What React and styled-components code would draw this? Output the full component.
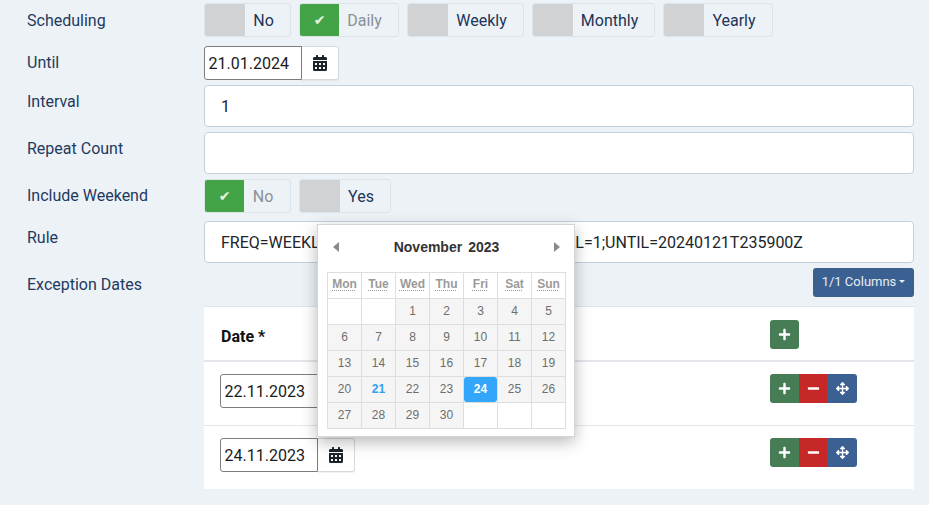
import React from 'react';
import styled, { createGlobalStyle } from 'styled-components';
import { FaArrowsAlt, FaCalendarAlt, FaMinus, FaPlus } from 'react-icons/fa';

const GlobalStyle = createGlobalStyle`
  html, body {
    margin: 0;
    padding: 0;
    background-color: #edf2f7;
    overflow: hidden;
  }
  body {
    font-family: Roboto, "Liberation Sans", sans-serif;
    font-size: 16px;
    line-height: 24px;
    color: #1c3558;
  }
`;

const Page = styled.div`
  position: relative;
  width: 929px;
  height: 505px;
  padding-top: 3px;
  box-sizing: border-box;
  overflow: hidden;
`;

const Row = styled.div`
  display: grid;
  grid-template-columns: 177px 710px;
  padding-left: 27px;
  margin-bottom: ${(p) => p.$after}px;
`;

const Label = styled.div`
  padding-top: ${(p) => p.$top}px;
  line-height: 24px;
  color: #1f3a5f;
`;

const ToggleGroup = styled.div`
  display: flex;
  gap: 8px;
`;

const Toggle = styled.div`
  display: flex;
  width: ${(p) => p.$width}px;
  height: 34px;
  box-sizing: border-box;
  border: 1px solid #dce3ea;
  border-radius: 3px;
  overflow: hidden;
`;

const ToggleHandle = styled.div`
  flex: 0 0 40px;
  margin: ${(p) => (p.$on ? '-1px 0 -1px -1px' : '0')};
  display: flex;
  align-items: center;
  justify-content: center;
  padding-left: ${(p) => (p.$on ? 1 : 0)}px;
  box-sizing: border-box;
  background-color: ${(p) => (p.$on ? '#43a447' : '#d0d2d4')};
  color: #e8f5e4;
  font: 14px "DejaVu Sans", sans-serif;
`;

const ToggleText = styled.div`
  flex: 1;
  padding-right: 8px;
  text-align: center;
  line-height: 33px;
  color: ${(p) => (p.$on ? '#8a9096' : '#1c3558')};
`;

const DateGroup = styled.div`
  display: flex;
  height: 34px;
`;

const DateInput = styled.input`
  width: 98px;
  height: 34px;
  box-sizing: border-box;
  padding: 0 0 0 3.5px;
  border: 1px solid #7d7d7d;
  border-radius: 3px 0 0 3px;
  background-color: #fff;
  font: 16px Roboto, sans-serif;
  color: #1a1a1a;
  outline: none;
`;

const DateButton = styled.button`
  width: 37px;
  height: 34px;
  padding: 0 0 1px;
  border: 1px solid #d6d9dc;
  border-left: none;
  border-radius: 0 3px 3px 0;
  background-color: #fff;
  box-shadow: 0 1px 1px rgba(0, 0, 0, 0.06);
  color: #1d2228;
  font-size: 16px;
  display: flex;
  align-items: center;
  justify-content: center;
`;

const TextInput = styled.input`
  width: 100%;
  height: 42px;
  box-sizing: border-box;
  padding: 0 16px;
  border: 1px solid #c5d0dd;
  border-radius: 4px;
  background-color: #fff;
  font: 16px Roboto, sans-serif;
  color: #212529;
  outline: none;
`;

const ColumnsBar = styled.div`
  display: flex;
  justify-content: flex-end;
  margin-bottom: 9px;
`;

const ColumnsButton = styled.button`
  width: 101px;
  height: 29px;
  padding: 0 0 2px;
  border: none;
  border-radius: 3px;
  background-color: #3b6192;
  color: #e6edf5;
  font: 13px Roboto, sans-serif;
  display: flex;
  align-items: center;
  justify-content: center;
  gap: 3px;
`;

const Caret = styled.span`
  width: 0;
  height: 0;
  border-left: 3px solid transparent;
  border-right: 3px solid transparent;
  border-top: 3px solid #e6edf5;
`;

const Table = styled.div`
  background-color: #fff;
  border-top: 1px solid #dfe4ea;
  height: 183px;
  box-sizing: border-box;
`;

const TableRow = styled.div`
  display: grid;
  grid-template-columns: 550px 144px;
  height: ${(p) => p.$height}px;
  box-sizing: border-box;
  border-bottom: ${(p) => p.$line || 'none'};
  padding: ${(p) => p.$pad}px 0 0 16px;
`;

const HeaderCell = styled.div`
  padding: 2px 0 0 1px;
  font-weight: 700;
  color: #111;
  line-height: 30px;
`;

const Actions = styled.div`
  display: flex;
  height: 29px;
  border-radius: 3px;
  overflow: hidden;
  width: fit-content;
`;

const ActionButton = styled.button`
  width: ${(p) => p.$width || 29}px;
  height: 29px;
  padding: 0;
  border: none;
  background-color: ${(p) => p.$bg};
  color: #fff;
  font-size: 13px;
  display: flex;
  align-items: center;
  justify-content: center;
`;

const Calendar = styled.div`
  position: absolute;
  left: 317px;
  top: 224px;
  width: 258px;
  height: 213px;
  box-sizing: border-box;
  padding: 0 8px 0 9px;
  background-color: #fff;
  border: 1px solid #d5d5d5;
  box-shadow: 0 5px 15px rgba(0, 0, 0, 0.28);
  font-family: "Liberation Sans", Arial, sans-serif;
  z-index: 5;
`;

const CalendarHead = styled.div`
  display: flex;
  align-items: center;
  justify-content: space-between;
  height: 47px;
  padding: 0 6px 4px;
  box-sizing: border-box;
`;

const Arrow = styled.span`
  width: 0;
  height: 0;
  border-top: 5px solid transparent;
  border-bottom: 5px solid transparent;
  border-right: ${(p) => (p.$dir === 'left' ? '6px solid #8a8a8a' : 'none')};
  border-left: ${(p) => (p.$dir === 'right' ? '6px solid #8a8a8a' : 'none')};
`;

const MonthTitle = styled.div`
  display: flex;
  gap: 6px;
  font-size: 14px;
  font-weight: 700;
  color: #333;
`;

const Grid = styled.table`
  width: 239px;
  height: 157px;
  table-layout: fixed;
  border-collapse: collapse;
  font-size: 12px;
  line-height: 14px;
`;

const WeekDay = styled.th`
  box-sizing: border-box;
  border: 1px solid #dedede;
  padding: 0 0 3px;
  height: 26px;
  font-weight: 700;
  color: #9a9a9a;
  text-align: center;
  & > abbr {
    text-decoration: underline dotted #9a9a9a;
    text-underline-offset: 2px;
  }
`;

const Day = styled.td`
  box-sizing: border-box;
  border: 1px solid #dedede;
  padding: ${(p) => (p.$picked ? '0' : '0 0 2px')};
  height: 26px;
  text-align: center;
  background-color: ${(p) => (p.$empty ? '#fff' : '#f5f5f5')};
  color: ${(p) => (p.$today ? '#2ea0f5' : '#6e6e6e')};
  font-weight: ${(p) => (p.$today ? 700 : 400)};
`;

const SelectedDay = styled.div`
  display: flex;
  align-items: center;
  justify-content: center;
  height: 25px;
  padding-bottom: 2px;
  box-sizing: border-box;
  border-radius: 3px;
  background-color: #33a5fa;
  color: #fff;
  font-weight: 700;
`;

const weekDays = ['Mon', 'Tue', 'Wed', 'Thu', 'Fri', 'Sat', 'Sun'];
const weeks = [
  [null, null, 1, 2, 3, 4, 5],
  [6, 7, 8, 9, 10, 11, 12],
  [13, 14, 15, 16, 17, 18, 19],
  [20, 21, 22, 23, 24, 25, 26],
  [27, 28, 29, 30, null, null, null],
];
const schedules = [
  { name: 'No', width: 87 },
  { name: 'Daily', width: 100, on: true },
  { name: 'Weekly', width: 117 },
  { name: 'Monthly', width: 123 },
  { name: 'Yearly', width: 110 },
];

function Switch({ name, width, on }) {
  return (
    <Toggle $width={width}>
      <ToggleHandle $on={on}>{on && '✔'}</ToggleHandle>
      <ToggleText $on={on}>{name}</ToggleText>
    </Toggle>
  );
}

function DateField({ value }) {
  return (
    <DateGroup>
      <DateInput readOnly value={value} />
      <DateButton>
        <FaCalendarAlt />
      </DateButton>
    </DateGroup>
  );
}

function RowActions() {
  return (
    <Actions>
      <ActionButton $bg="#477d55">
        <FaPlus />
      </ActionButton>
      <ActionButton $bg="#c62828" $width={28}>
        <FaMinus />
      </ActionButton>
      <ActionButton $bg="#3b6192" $width={30}>
        <FaArrowsAlt />
      </ActionButton>
    </Actions>
  );
}

function App() {
  return (
    <Page>
      <GlobalStyle />
      <Row $after={9}>
        <Label $top={6}>Scheduling</Label>
        <ToggleGroup>
          {schedules.map((s) => (
            <Switch key={s.name} {...s} />
          ))}
        </ToggleGroup>
      </Row>
      <Row $after={5}>
        <Label $top={5}>Until</Label>
        <DateField value="21.01.2024" />
      </Row>
      <Row $after={5}>
        <Label $top={5}>Interval</Label>
        <TextInput readOnly value="1" />
      </Row>
      <Row $after={5}>
        <Label $top={5}>Repeat Count</Label>
        <TextInput readOnly value="" />
      </Row>
      <Row $after={8}>
        <Label $top={5}>Include Weekend</Label>
        <ToggleGroup>
          <Switch name="No" width={87} on />
          <Switch name="Yes" width={92} />
        </ToggleGroup>
      </Row>
      <Row $after={5}>
        <Label $top={5}>Rule</Label>
        <TextInput readOnly value="FREQ=WEEKLY;BYDAY=MO,TU,WE,TH,FR;INTERVAL=1;UNTIL=20240121T235900Z" />
      </Row>
      <Row $after={0}>
        <Label $top={5}>Exception Dates</Label>
        <div>
          <ColumnsBar>
            <ColumnsButton>
              1/1 Columns <Caret />
            </ColumnsButton>
          </ColumnsBar>
          <Table>
            <TableRow $height={55} $line="2px solid #e3e6ea" $pad={13}>
              <HeaderCell>Date *</HeaderCell>
              <Actions>
                <ActionButton $bg="#477d55">
                  <FaPlus />
                </ActionButton>
              </Actions>
            </TableRow>
            <TableRow $height={64} $line="1px solid #e3e6ea" $pad={12}>
              <DateField value="22.11.2023" />
              <RowActions />
            </TableRow>
            <TableRow $height={63} $pad={12}>
              <DateField value="24.11.2023" />
              <RowActions />
            </TableRow>
          </Table>
        </div>
      </Row>
      <Calendar>
        <CalendarHead>
          <Arrow $dir="left" />
          <MonthTitle>
            <span>November</span>
            <span>2023</span>
          </MonthTitle>
          <Arrow $dir="right" />
        </CalendarHead>
        <Grid>
          <thead>
            <tr>
              {weekDays.map((d) => (
                <WeekDay key={d}>
                  <abbr>{d}</abbr>
                </WeekDay>
              ))}
            </tr>
          </thead>
          <tbody>
            {weeks.map((week, i) => (
              <tr key={i}>
                {week.map((d, j) => (
                  <Day key={j} $empty={d === null} $today={d === 21} $picked={d === 24}>
                    {d === 24 ? <SelectedDay>{d}</SelectedDay> : d}
                  </Day>
                ))}
              </tr>
            ))}
          </tbody>
        </Grid>
      </Calendar>
    </Page>
  );
}

export default App;
